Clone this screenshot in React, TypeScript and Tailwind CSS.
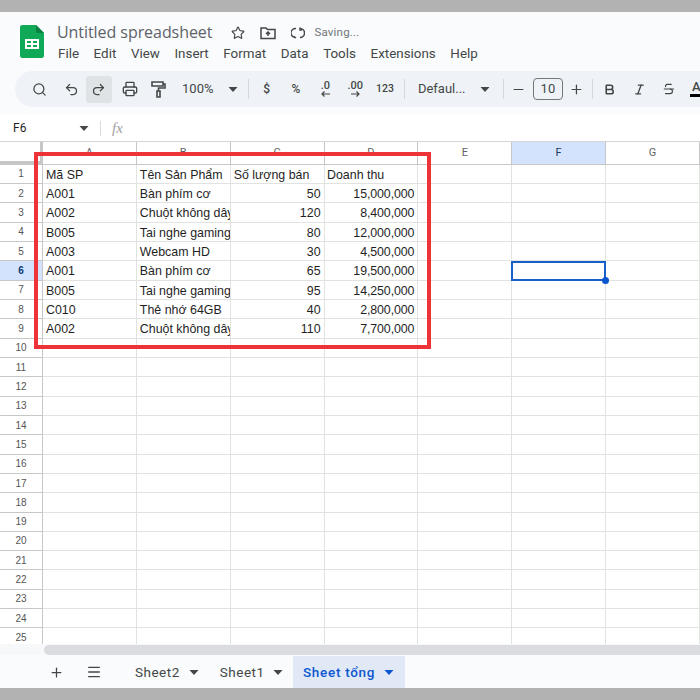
import React from "react";
import { Search, Undo2, Redo2, Printer, Star, Minus, Plus, Bold, Italic, Strikethrough, Menu } from "lucide-react";

const rows: [string, string, string, string][] = [
  ["A001", "Bàn phím cơ", "50", "15,000,000"],
  ["A002", "Chuột không dây", "120", "8,400,000"],
  ["B005", "Tai nghe gaming", "80", "12,000,000"],
  ["A003", "Webcam HD", "30", "4,500,000"],
  ["A001", "Bàn phím cơ", "65", "19,500,000"],
  ["B005", "Tai nghe gaming", "95", "14,250,000"],
  ["C010", "Thẻ nhớ 64GB", "40", "2,800,000"],
  ["A002", "Chuột không dây", "110", "7,700,000"],
];

const Caret = ({ cls = "text-[#444746]" }: { cls?: string }) => (
  <svg width="10" height="5" viewBox="0 0 10 5" className={cls}>
    <path d="M0.5 0h9L5 5z" fill="currentColor" />
  </svg>
);

const Divider = () => <div className="w-px h-[20px] bg-[#d5d8dc]" />;

const SheetsLogo = () => (
  <svg width="24" height="33" viewBox="0 0 24 33">
    <path d="M2.5 0H16l8 8v22.500a2.500 2.500 0 0 1-2.500 2.500h-19A2.500 2.500 0 0 1 0 30.500V2.500A2.500 2.500 0 0 1 2.500 0z" fill="#0fa958" />
    <path d="M16 0l8 8h-6a2 2 0 0 1-2-2z" fill="#0b8043" />
    <path d="M5 14h14v10H5z M7 16v2h4v-2z M13 16v2h4v-2z M7 20v2h4v-2z M13 20v2h4v-2z" fill="#fff" fillRule="evenodd" />
  </svg>
);

function GridRow({ n, data }: { n: number; data?: string[] }) {
  const isSel = n === 6;
  const cell = "h-[19.33px] border-r border-b border-[#e1e3e1] pl-[3px] pr-[3px] overflow-hidden whitespace-nowrap leading-[20.4px] text-[12.4px] text-[#1f1f1f]";
  return (
    <>
      <div className={`h-[19.33px] border-r border-b border-[#c7c7c7] flex items-center justify-center text-[10px] ${isSel ? "bg-[#d3e3fd] text-[#0b3a75] font-semibold" : "bg-white text-[#555]"}`}>
        {n}
      </div>
      <div className={cell}>{data?.[0]}</div>
      <div className={cell}>{data?.[1]}</div>
      <div className={`${cell} text-right`}>{data?.[2]}</div>
      <div className={`${cell} text-right pr-[2px] tracking-[-0.1px]`}>{data?.[3]}</div>
      <div className={cell} />
      <div className={`${cell} relative overflow-visible`}>
        {isSel && (
          <div className="absolute left-[-1px] top-0 w-[95px] h-[20px] border-2 border-[#1a5fc8] z-10">
            <div className="absolute right-[-5px] bottom-[-5px] w-[7px] h-[7px] rounded-full bg-[#0b57d0]" />
          </div>
        )}
      </div>
      <div className={cell} />
    </>
  );
}

export default function App() {
  const heads = ["A", "B", "C", "D", "E", "F", "G"];
  const menu = ["File", "Edit", "View", "Insert", "Format", "Data", "Tools", "Extensions", "Help"];
  return (
    <div className="w-[700px] h-[700px] overflow-hidden flex flex-col bg-white font-['Roboto','Liberation_Sans',sans-serif]">
      <div className="h-[12px] shrink-0 bg-[#b2b2b2]" />

      {/* Header */}
      <div className="h-[103px] shrink-0 bg-[#f9fbfd] flex flex-col">
        <div className="h-[59px] flex pl-[20px] pt-[13px]">
          <SheetsLogo />
          <div className="ml-[13px] -mt-[4px]">
            <div className="flex items-center h-[22px]">
              <span className="text-[16px] text-[#5f6368] font-['Open_Sans','Roboto',sans-serif] tracking-[-0.06px]">Untitled spreadsheet</span>
              <Star size={14} strokeWidth={2} className="ml-[19px] mt-[2px] text-[#444746]" />
              <svg width="16" height="14" viewBox="0 0 16 14" className="ml-[15px] mt-[2px] text-[#444746]" fill="none" stroke="currentColor" strokeWidth="1.5">
                <path d="M1 2h5l1.500 1.500H15V12.500H1z" />
                <path d="M8 10V6M6 8l2-2 2 2" />
              </svg>
              <svg width="14" height="14" viewBox="0 0 14 14" className="ml-[15px] mt-[2px] text-[#444746]" fill="none" stroke="currentColor" strokeWidth="1.5">
                <path d="M5 2.500A4.500 4.500 0 0 0 4 11.500M9 2.500A4.500 4.500 0 0 1 9 11.500" />
                <path d="M3 10.500l2 1.500M9 1.500v2.500h2" />
              </svg>
              <span className="ml-[9px] mt-[2px] text-[11.500px] text-[#70757a] tracking-[0.2px]">Saving...</span>
            </div>
            <div className="flex h-[20px] items-center gap-[14.6px] mt-[1px] text-[13.4px] text-[#444746] ml-[1px]">
              {menu.map((m) => (
                <span key={m}>{m}</span>
              ))}
            </div>
          </div>
        </div>
        <div className="ml-[15px] h-[36px] rounded-l-[18px] bg-[#eff3f8] flex items-center text-[#444746]">
          <div className="w-[11px]" />
          <div className="w-[28px] flex justify-center"><Search size={15} strokeWidth={2} /></div>
          <div className="w-[4px]" />
          <div className="w-[28px] flex justify-center"><Undo2 size={15} strokeWidth={2} /></div>
          <div className="w-[27px] h-[27px] rounded-[3px] bg-[#e0e3e6] flex items-center justify-center"><Redo2 size={15} strokeWidth={2} /></div>
          <div className="w-[4px]" />
          <div className="w-[28px] flex justify-center"><Printer size={16} strokeWidth={2} /></div>
          <div className="w-[28px] flex justify-center">
            <svg width="15" height="17" viewBox="0 0 15 17" fill="none" stroke="currentColor" strokeWidth="1.600">
              <path d="M1 1h11v4H1z" />
              <path d="M12 3h2v4H7.500v3" />
              <path d="M6 10h3v6H6z" />
            </svg>
          </div>
          <span className="ml-[10px] w-[34px] text-[13px]">100%</span>
          <div className="ml-[12px]"><Caret /></div>
          <div className="ml-[10px]"><Divider /></div>
          <span className="w-[36px] text-center text-[12px] font-medium">$</span>
          <span className="w-[23px] text-center text-[12px] font-medium">%</span>
          <div className="w-[36px] flex flex-col items-center leading-none">
            <span className="text-[11px] font-medium h-[10px] leading-[10px]">.0</span>
            <svg width="9" height="6" viewBox="0 0 9 6" fill="none" stroke="currentColor" strokeWidth="1.200"><path d="M9 3H1M3.500 0.500 1 3l2.500 2.500" /></svg>
          </div>
          <div className="w-[24px] flex flex-col items-center leading-none">
            <span className="text-[11px] font-medium h-[10px] leading-[10px]">.00</span>
            <svg width="9" height="6" viewBox="0 0 9 6" fill="none" stroke="currentColor" strokeWidth="1.200"><path d="M0 3h8M5.500 0.500 8 3 5.500 5.500" /></svg>
          </div>
          <span className="w-[36px] text-center text-[10.500px] font-medium">123</span>
          <div className="ml-[1px]"><Divider /></div>
          <span className="ml-[13px] w-[51px] text-[13px]">Defaul...</span>
          <div className="ml-[11px]"><Caret /></div>
          <div className="ml-[13px]"><Divider /></div>
          <Minus size={15} strokeWidth={2} className="ml-[7px]" />
          <div className="ml-[7px] w-[31px] h-[22px] rounded-[4px] border border-[#747775] flex items-center justify-center text-[13px]">10</div>
          <Plus size={15} strokeWidth={2} className="ml-[6px]" />
          <div className="ml-[8px]"><Divider /></div>
          <Bold size={13} strokeWidth={3} className="ml-[10px]" />
          <Italic size={13} strokeWidth={2.500} className="ml-[17px]" />
          <Strikethrough size={14} strokeWidth={2} className="ml-[16px]" />
          <div className="ml-[14px] relative w-[10px] h-[20px]">
            <span className="absolute left-[2px] top-0 text-[13px] leading-[15px] font-medium">A</span>
            <div className="absolute left-0 top-[15px] w-[20px] h-[3px] bg-black" />
          </div>
        </div>
        <div className="h-[8px]" />
      </div>

      {/* Formula bar */}
      <div className="h-[27px] shrink-0 bg-white flex items-center border-b border-[#d5d5d5]">
        <span className="ml-[13px] w-[66px] text-[12px] text-[#1f1f1f]">F6</span>
        <Caret />
        <div className="ml-[11px] w-px h-[15px] bg-[#dcdcdc]" />
        <span className="ml-[11px] text-[15px] italic text-[#a0a0a0] font-['Liberation_Serif',serif]">fx</span>
      </div>

      {/* Grid */}
      <div className="relative h-[513px] shrink-0 overflow-hidden font-['Liberation_Sans',sans-serif]">
        <div className="grid grid-cols-[43px_repeat(7,93.850px)]">
          <div className="h-[22.6px] relative bg-white">
            <div className="absolute right-0 top-0 w-[3px] h-full bg-[#c4c7c5]" />
            <div className="absolute left-0 bottom-0 w-full h-[4px] bg-[#c4c7c5]" />
          </div>
          {heads.map((h) => (
            <div
              key={h}
              className={`h-[22.6px] border-r border-b border-[#c7c7c7] flex items-center justify-center text-[11px] font-['Roboto',sans-serif] ${h === "F" ? "bg-[#d3e3fd] text-[#1f3a5f]" : "bg-white text-[#5f6368]"}`}
            >
              {h}
            </div>
          ))}
          <GridRow n={1} data={["Mã SP", "Tên Sản Phẩm", "", ""]} />
          {Array.from({ length: 25 }, (_, i) => i + 2).map((n) => (
            <GridRow key={n} n={n} data={rows[n - 2]} />
          ))}
        </div>
        {/* Header labels in C1/D1 are left aligned */}
        <div className="absolute left-[230.700px] top-[22.6px] w-[188px] h-[19px] flex text-[12.400px] text-[#1f1f1f] leading-[20.4px] whitespace-nowrap">
          <span className="w-[93.850px] pl-[3px]">Số lượng bán</span>
          <span className="pl-[2.500px]">Doanh thu</span>
        </div>
        {/* Red annotation box */}
        <div className="absolute left-[34px] top-[10px] w-[397px] h-[197px] border-[4px] border-[#ee3338] z-20" />
        {/* Scrollbar */}
        <div className="absolute left-0 right-0 bottom-0 h-[11px] bg-[#f7f8f9] z-10 flex items-center pl-[44px]">
          <div className="w-full h-[10px] rounded-l-[5px] bg-[#dadce0]" />
        </div>
      </div>

      {/* Tabs */}
      <div className="h-[33px] shrink-0 bg-[#f9fbfd] flex items-center pt-[1px] text-[#444746] text-[13.500px] tracking-[0.5px]">
        <Plus size={15} strokeWidth={2} className="ml-[49px]" />
        <Menu size={16} strokeWidth={2} className="ml-[22px]" />
        <div className="ml-[33px] flex items-center">
          Sheet2
          <span className="ml-[9px]"><Caret /></span>
        </div>
        <div className="ml-[21px] flex items-center">
          Sheet1
          <span className="ml-[8px]"><Caret /></span>
        </div>
        <div className="ml-[10px] h-full w-[112px] bg-[#e1e9f7] flex items-center justify-center text-[#0b57d0] font-medium tracking-[0.7px]">
          Sheet tổng
          <span className="ml-[9px]"><Caret cls="text-[#0b57d0]" /></span>
        </div>
      </div>
      <div className="flex-1 bg-[#b2b2b2]" />
    </div>
  );
}
